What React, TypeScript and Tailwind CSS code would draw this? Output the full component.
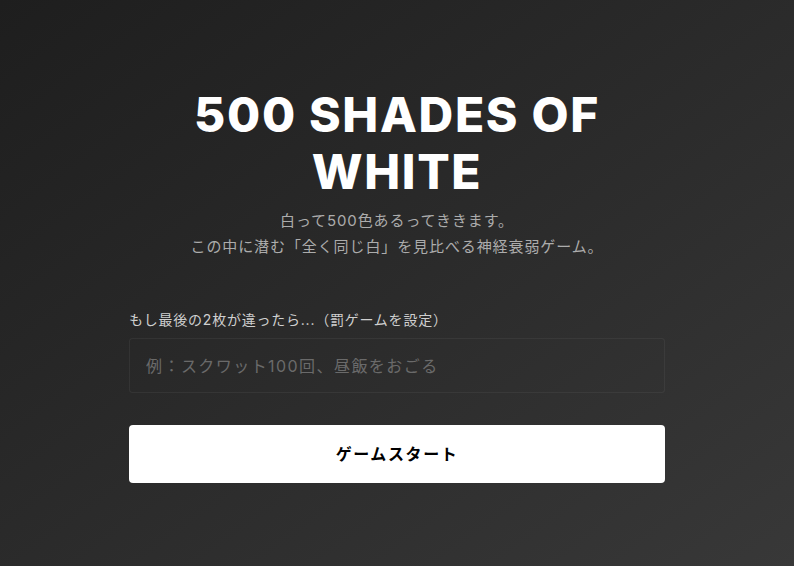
export default function App() {
  return (
    <div
      className="min-h-screen w-full flex justify-center bg-gradient-to-br from-[#1e1e1e] to-[#383838] text-white"
      style={{ fontFamily: "Inter, 'Noto Sans CJK JP', sans-serif" }}
    >
      <div className="w-[536px] pt-[86px]">
        <h1 className="text-center text-[48px] leading-[57px] font-extrabold tracking-[0.035em]">
          500 SHADES OF WHITE
        </h1>
        <p className="mt-[8px] text-center text-[15px] leading-[26px] tracking-[0.06em] text-[#acacac]">
          白って500色あるってききます。
          <br />
          この中に潜む「全く同じ白」を見比べる神経衰弱ゲーム。
        </p>

        <label className="mt-[50px] block text-[14px] leading-[20px] tracking-[0.055em] text-[#cfcfcf]">
          もし最後の2枚が違ったら...（罰ゲームを設定）
        </label>
        <input
          type="text"
          placeholder="例：スクワット100回、昼飯をおごる"
          className="mt-[8px] w-full h-[55px] px-[16px] rounded-[3px] border border-white/5 bg-transparent text-[16px] tracking-[0.09em] text-white placeholder:text-[#6a6a6a] outline-none"
        />

        <button className="mt-[32px] w-full h-[58px] rounded-[4px] bg-white text-black text-[16px] font-bold tracking-[0.1em]">
          ゲームスタート
        </button>
      </div>
    </div>
  );
}
